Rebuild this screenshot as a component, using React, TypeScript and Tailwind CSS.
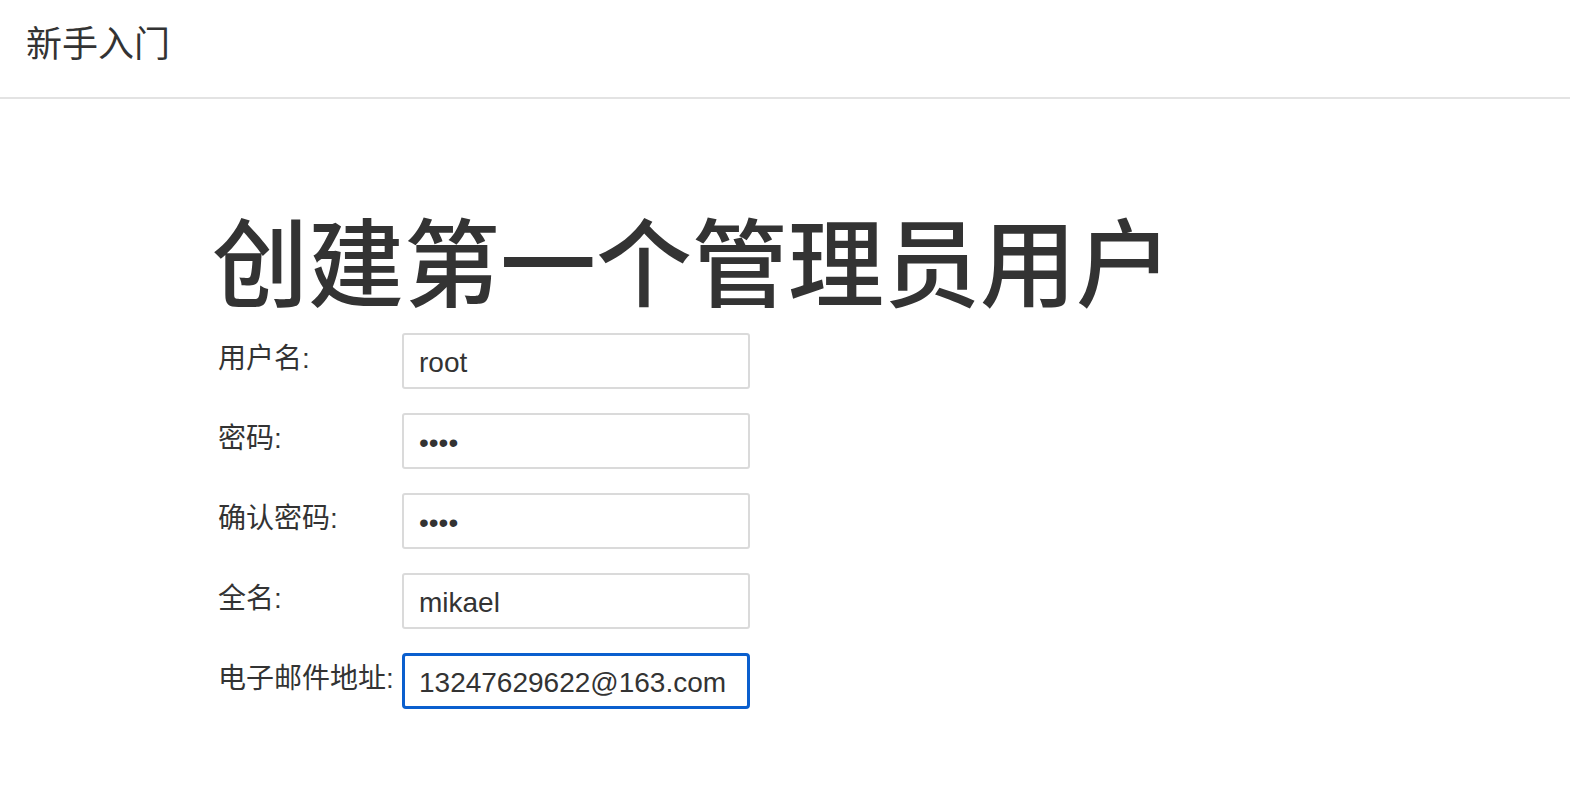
const FONT = "font-['Liberation_Sans','Noto_Sans_CJK_SC',sans-serif]"

const FIELDS = [
  { label: "用户名:", value: "root", type: "text" },
  { label: "密码:", value: "1234", type: "password" },
  { label: "确认密码:", value: "1234", type: "password" },
  { label: "全名:", value: "mikael", type: "text" },
  { label: "电子邮件地址:", value: "13247629622@163.com", type: "text", focused: true },
]

export default function App() {
  return (
    <div className={`min-h-screen bg-white text-[#333] ${FONT}`}>
      <header className="flex h-[99px] items-center border-b-2 border-[#e3e3e3] pb-[8px] pl-[26px]">
        <h1 className="text-[36px] leading-none text-[#333]">新手入门</h1>
      </header>

      <main className="pl-[212px] pt-[112px]">
        <h2 className="text-[96px] font-medium leading-[110px] text-[#333]">创建第一个管理员用户</h2>
        <form className="mt-[12px] flex flex-col gap-[24px]">
          {FIELDS.map((field) => (
            <div key={field.label} className="flex items-start">
              <label className="w-[190px] pl-[6px] pt-[8px] text-[28px] leading-[36px] text-[#333]">{field.label}</label>
              <input
                readOnly
                type={field.type}
                defaultValue={field.value}
                className={
                  field.focused
                    ? "h-[56px] w-[348px] rounded-[4px] border-[3px] border-[#0b5fce] pl-[14px] pt-[3px] text-[28px] text-[#333] outline-none"
                    : "h-[56px] w-[348px] rounded-[3px] border-2 border-[#dadada] pl-[15px] pt-[3px] text-[28px] text-[#333] outline-none"
                }
              />
            </div>
          ))}
        </form>
      </main>
    </div>
  )
}
